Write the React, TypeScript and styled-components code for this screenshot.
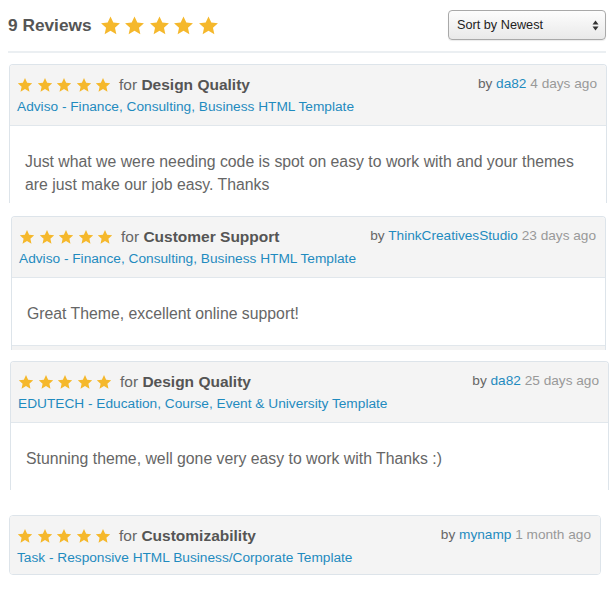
import React, { FC } from 'react';
import styled, { createGlobalStyle } from 'styled-components';

const GlobalStyle = createGlobalStyle`
  body {
    margin: 0;
    background: #fff;
    font-family: "Liberation Sans", Arial, Helvetica, sans-serif;
  }
`;

const Page = styled.div`
  width: 615px;
  padding-top: 10px;
`;

const TopBar = styled.div`
  display: flex;
  align-items: center;
  justify-content: space-between;
  height: 30px;
  margin: 0 9px 0 8px;
`;

const Heading = styled.div`
  display: flex;
  align-items: center;
  gap: 8px;
  font-size: 17.3px;
  font-weight: bold;
  color: #555;
`;

const Stars = styled.div<{ $gap: number }>`
  display: flex;
  align-items: center;
  gap: ${(p) => p.$gap}px;
`;

const SortBox = styled.div`
  display: flex;
  align-items: center;
  justify-content: space-between;
  box-sizing: border-box;
  width: 158px;
  height: 30px;
  padding: 0 6px 0 8px;
  border: 1px solid #a9a9a9;
  border-radius: 4px;
  background: linear-gradient(#fdfdfd, #e9e9e9);
  box-shadow: 0 1px 1px rgba(0, 0, 0, 0.08);
  font-size: 12.7px;
  color: #222;
`;

const Divider = styled.div`
  height: 2px;
  margin: 11px 9px 11px 8px;
  background: #ebeff2;
`;

const Card = styled.div<{ $left: number; $width: number; $top: number }>`
  box-sizing: border-box;
  width: ${(p) => p.$width}px;
  margin: ${(p) => p.$top}px 0 0 ${(p) => p.$left}px;
  border: 1px solid #dde4ea;
  border-radius: 4px;
  overflow: hidden;
`;

const CutCard = styled(Card)`
  border-bottom: none;
  border-radius: 4px 4px 0 0;
`;

const CardHead = styled.div<{ $pb: number }>`
  display: flex;
  justify-content: space-between;
  align-items: flex-start;
  padding: 10px 9px ${(p) => p.$pb}px 7px;
  background: #f4f4f4;
`;

const HeadLeft = styled.div`
  display: flex;
  flex-direction: column;
  gap: 2px;
`;

const RatingLine = styled.div`
  display: flex;
  align-items: center;
  gap: 8px;
  height: 20px;
  font-size: 15.5px;
  color: #666;
  strong {
    color: #555;
  }
`;

const ItemLink = styled.a`
  font-size: 13.7px;
  line-height: 20px;
  color: #1f8bbf;
  text-decoration: none;
`;

const Byline = styled.div`
  font-size: 13.65px;
  line-height: 18px;
  color: #666;
  white-space: nowrap;
  a {
    color: #1f8bbf;
    text-decoration: none;
  }
  span {
    color: #999;
  }
`;

const CardBody = styled.div<{ $pb: number }>`
  padding: 24px 15px ${(p) => p.$pb}px;
  border-top: 1px solid #e1e7ec;
  background: #fff;
  font-size: 15.8px;
  line-height: 23px;
  color: #666;
`;

const CardFoot = styled.div`
  height: 4px;
  border-top: 1px solid #e1e7ec;
  background: #f3f3f3;
`;

const Star: FC<{ size: number }> = ({ size }) => (
  <svg width={size} height={size} viewBox="0 0 24 24">
    <path
      d="M12 1.6l3.2 7 7.6.8-5.7 5.1 1.6 7.5L12 18.1 5.3 22l1.6-7.5L1.2 9.4l7.6-.8z"
      fill="#f5b82c"
    />
  </svg>
);

const FiveStars: FC<{ size: number; gap: number }> = ({ size, gap }) => (
  <Stars $gap={gap}>
    {[0, 1, 2, 3, 4].map((i) => (
      <Star key={i} size={size} />
    ))}
  </Stars>
);

const SortArrows = () => (
  <svg width="7" height="11" viewBox="0 0 7 11">
    <path d="M3.5 0.5L6.5 4.5H0.5z M3.5 10.5L6.5 6.5H0.5z" fill="#333" />
  </svg>
);

type Review = {
  topic: string;
  item: string;
  author: string;
  when: string;
};

const ReviewHead: FC<{ r: Review; pb?: number }> = ({ r, pb = 8 }) => (
  <CardHead $pb={pb}>
    <HeadLeft>
      <RatingLine>
        <FiveStars size={16} gap={3.5} />
        <span>
          for <strong>{r.topic}</strong>
        </span>
      </RatingLine>
      <ItemLink href="#">{r.item}</ItemLink>
    </HeadLeft>
    <Byline>
      by <a href="#">{r.author}</a> <span>{r.when}</span>
    </Byline>
  </CardHead>
);

export default function App() {
  return (
    <Page>
      <GlobalStyle />
      <TopBar>
        <Heading>
          9 Reviews
          <FiveStars size={21} gap={3.5} />
        </Heading>
        <SortBox>
          Sort by Newest
          <SortArrows />
        </SortBox>
      </TopBar>
      <Divider />

      <CutCard $left={9} $width={598} $top={0}>
        <ReviewHead
          r={{
            topic: 'Design Quality',
            item: 'Adviso - Finance, Consulting, Business HTML Template',
            author: 'da82',
            when: '4 days ago',
          }}
        />
        <CardBody $pb={7}>
          Just what we were needing code is spot on easy to work with and your
          themes are just make our job easy. Thanks
        </CardBody>
      </CutCard>

      <CutCard $left={11} $width={595} $top={13}>
        <ReviewHead
          r={{
            topic: 'Customer Support',
            item: 'Adviso - Finance, Consulting, Business HTML Template',
            author: 'ThinkCreativesStudio',
            when: '23 days ago',
          }}
        />
        <CardBody $pb={20}>Great Theme, excellent online support!</CardBody>
        <CardFoot />
      </CutCard>

      <CutCard $left={10} $width={599} $top={11}>
        <ReviewHead
          r={{
            topic: 'Design Quality',
            item: 'EDUTECH - Education, Course, Event & University Template',
            author: 'da82',
            when: '25 days ago',
          }}
        />
        <CardBody $pb={20}>
          Stunning theme, well gone very easy to work with Thanks :)
        </CardBody>
      </CutCard>

      <Card $left={9} $width={592} $top={25}>
        <ReviewHead
          pb={6}
          r={{
            topic: 'Customizability',
            item: 'Task - Responsive HTML Business/Corporate Template',
            author: 'mynamp',
            when: '1 month ago',
          }}
        />
      </Card>
    </Page>
  );
}
